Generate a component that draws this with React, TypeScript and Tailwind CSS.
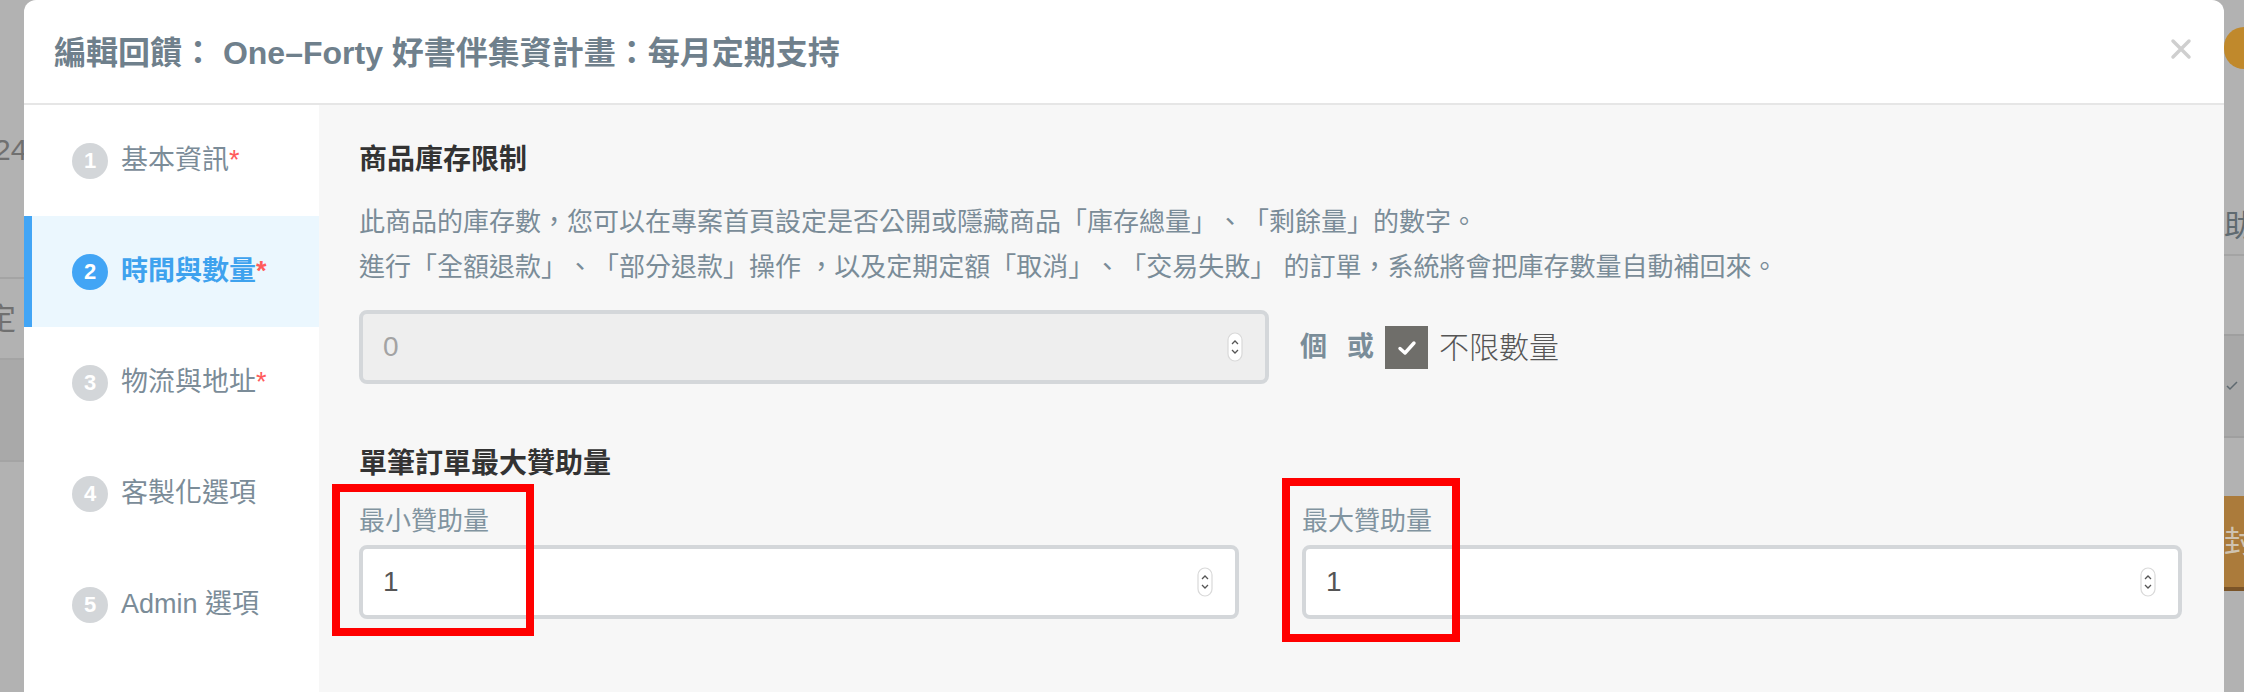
import React from 'react';

const steps = [
    { n: 1, label: '基本資訊', required: true },
    { n: 2, label: '時間與數量', required: true, active: true },
    { n: 3, label: '物流與地址', required: true },
    { n: 4, label: '客製化選項', required: false },
    { n: 5, label: 'Admin 選項', required: false },
];

function Spinner() {
    return (
        <svg width="16" height="30" viewBox="0 0 16 30" className="shrink-0">
            <rect x="1" y="1" width="14" height="28" rx="7" fill="#ffffff" stroke="#d9d9d9" strokeWidth="1.2" />
            <path d="M5 12 L8 9 L11 12" fill="none" stroke="#555" strokeWidth="1.3" />
            <path d="M5 18 L8 21 L11 18" fill="none" stroke="#555" strokeWidth="1.3" />
        </svg>
    );
}

function NumberInput({ value, disabled }: { value: string; disabled?: boolean }) {
    return (
        <div
            className={`flex h-[74px] items-center justify-between rounded-[8px] border-4 border-[#d4d7da] pl-[20px] pr-[22px] ${disabled ? 'bg-[#eeeeee]' : 'bg-white'}`}
        >
            <span className={`text-[28px] ${disabled ? 'text-[#a3a3a3]' : 'text-[#555555]'}`}>{value}</span>
            <Spinner />
        </div>
    );
}

export default function App() {
    return (
        <div
            className="flex h-[692px] w-[2244px] overflow-hidden bg-[#b2b2b2] [text-spacing-trim:space-all]"
            style={{ fontFamily: '"Liberation Sans", "Noto Sans CJK TC", sans-serif' }}
        >
            {/* dimmed page behind, left edge */}
            <div className="flex w-[24px] shrink-0 flex-col text-[30px] text-[#707070]">
                <div className="h-[125px]" />
                <div className="h-[50px] overflow-hidden whitespace-nowrap leading-[50px] -ml-[6px]">24</div>
                <div className="h-[104px] border-b-2 border-[#a4a4a4]" />
                <div className="flex h-[79px] items-center overflow-hidden whitespace-nowrap -ml-[14px]">定</div>
                <div className="h-[104px] border-y-2 border-[#a4a4a4] bg-[#a9a9a9]" />
                <div className="flex-1" />
            </div>

            {/* modal */}
            <div className="flex w-[2200px] shrink-0 flex-col rounded-t-[12px] bg-white">
                <div className="flex h-[105px] shrink-0 items-center justify-between border-b-2 border-[#e6e6e6] pl-[30px] pr-[32px] pt-[2px]">
                    <h2 className="text-[32px] font-bold text-[#6f808c]">
                        編輯回饋： One–Forty 好書伴集資計畫：每月定期支持
                    </h2>
                    <svg width="22" height="22" viewBox="0 0 22 22" className="mb-[8px]">
                        <path d="M3 3 L19 19 M19 3 L3 19" stroke="#cfcfcf" strokeWidth="3.5" strokeLinecap="round" />
                    </svg>
                </div>

                <div className="flex flex-1">
                    {/* steps */}
                    <div className="flex w-[295px] shrink-0 flex-col bg-white">
                        {steps.map((s) => (
                            <div
                                key={s.n}
                                className={`flex h-[111px] items-center gap-[13px] ${s.active ? 'border-l-8 border-[#42a5f5] bg-[#ebf7fe] pl-[40px]' : 'pl-[48px]'}`}
                            >
                                <span
                                    className={`flex h-[36px] w-[36px] items-center justify-center rounded-full text-[22px] font-bold text-white ${s.active ? 'bg-[#42a5f5]' : 'bg-[#d3d6d9]'}`}
                                >
                                    {s.n}
                                </span>
                                <span
                                    className={`text-[27px] ${s.active ? 'font-bold text-[#3ea2ee]' : 'text-[#7b8c98]'}`}
                                >
                                    {s.label}
                                    {s.required && <span className="text-[#ff5b5b]">*</span>}
                                </span>
                            </div>
                        ))}
                    </div>

                    {/* content */}
                    <div className="flex-1 bg-[#f7f7f7] pl-[40px] pr-[42px] pt-[35px]">
                        <h3 className="text-[28px] font-bold leading-[40px] text-[#333333]">商品庫存限制</h3>
                        <p className="mt-[20px] text-[26px] leading-[45px] text-[#7a8c98]">
                            此商品的庫存數，您可以在專案首頁設定是否公開或隱藏商品「庫存總量」、「剩餘量」的數字。
                            <br />
                            進行「全額退款」、「部分退款」操作 ，以及定期定額「取消」、「交易失敗」 的訂單，系統將會把庫存數量自動補回來。
                        </p>

                        <div className="mt-[20px] flex items-center">
                            <div className="w-[910px]">
                                <div className="h-[75px]">
                                    <NumberInput value="0" disabled />
                                </div>
                            </div>
                            <span className="ml-[31px] text-[27px] font-bold text-[#7a8d99]">個</span>
                            <span className="ml-[20px] text-[27px] font-bold text-[#7a8d99]">或</span>
                            <span className="ml-[11px] flex h-[43px] w-[43px] items-center justify-center bg-[#6f6e6a]">
                                <svg width="24" height="24" viewBox="0 0 24 24">
                                    <path d="M5 12.5 L10 17 L19 7" fill="none" stroke="#ffffff" strokeWidth="3.4" strokeLinecap="round" strokeLinejoin="round" />
                                </svg>
                            </span>
                            <span className="ml-[11px] text-[30px] font-light text-[#555555]">不限數量</span>
                        </div>

                        <h3 className="mt-[59px] text-[28px] font-bold leading-[40px] text-[#333333]">單筆訂單最大贊助量</h3>

                        <div className="grid grid-cols-2 gap-x-[63px]">
                            <div className="relative pt-[19px]">
                                <div className="text-[26px] leading-[36px] text-[#8194a0]">最小贊助量</div>
                                <div className="mt-[6px]">
                                    <NumberInput value="1" />
                                </div>
                                <div className="pointer-events-none absolute left-[-27px] top-0 h-[152px] w-[202px] border-8 border-[#ff0000]" />
                            </div>
                            <div className="relative pt-[19px]">
                                <div className="text-[26px] leading-[36px] text-[#8194a0]">最大贊助量</div>
                                <div className="mt-[6px]">
                                    <NumberInput value="1" />
                                </div>
                                <div className="pointer-events-none absolute left-[-20px] top-[-6px] h-[164px] w-[178px] border-8 border-[#ff0000]" />
                            </div>
                        </div>
                    </div>
                </div>
            </div>

            {/* dimmed page behind, right edge */}
            <div className="flex w-[20px] shrink-0 flex-col text-[30px] text-[#5f6a70]">
                <div className="mt-[27px] h-[42px] w-[40px] rounded-full bg-[#c0892c]" />
                <div className="h-[131px]" />
                <div className="h-[52px] overflow-hidden whitespace-nowrap leading-[52px]">助</div>
                <div className="h-[4px] border-b-2 border-[#a4a4a4]" />
                <div className="h-[78px]" />
                <div className="flex h-[104px] items-center border-y-2 border-[#9f9f9f] bg-[#a8a8a8] pl-[2px]">
                    <svg width="12" height="10" viewBox="0 0 12 10">
                        <path d="M1 5 L4 8 L11 1" fill="none" stroke="#5f6a70" strokeWidth="1.5" />
                    </svg>
                </div>
                <div className="h-[58px]" />
                <div className="flex h-[95px] items-center overflow-hidden whitespace-nowrap border-b-4 border-[#7a5428] bg-[#ab7b3b] text-[#cfc3b0]">封</div>
                <div className="flex-1" />
            </div>
        </div>
    );
}
